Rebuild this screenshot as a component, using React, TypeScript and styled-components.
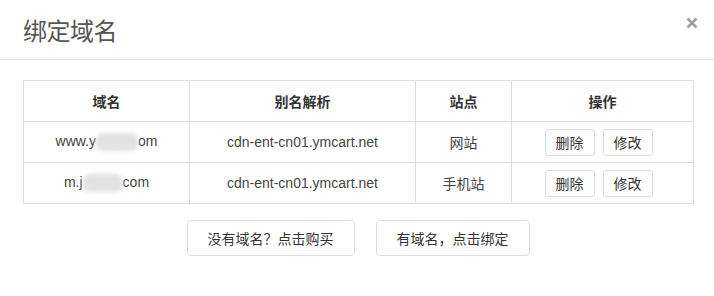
import React from "react";
import styled, { createGlobalStyle } from "styled-components";

const GlobalStyle = createGlobalStyle`
  html, body {
    margin: 0;
    padding: 0;
    background: #fff;
  }
  body {
    font-family: "Liberation Sans", "Noto Sans CJK SC", sans-serif;
    font-size: 14px;
    color: #333;
  }
`;

const Modal = styled.div`
  width: 714px;
  height: 296px;
  background: #fff;
  box-sizing: border-box;
`;

const Header = styled.div`
  position: relative;
  height: 60px;
  box-sizing: border-box;
  padding: 0 23px;
  display: flex;
  align-items: center;
  border-bottom: 1px solid #e5e5e5;
`;

const Title = styled.h4`
  margin: 0;
  font-size: 24px;
  font-weight: normal;
  color: #555;
  letter-spacing: -0.5px;
`;

const Close = styled.button`
  position: absolute;
  right: 14px;
  top: 15px;
  border: 0;
  background: none;
  padding: 0;
  width: 16px;
  height: 16px;
  cursor: pointer;
`;

const Body = styled.div`
  padding: 20px 21px 0 23px;
`;

const Table = styled.table`
  width: 670px;
  border-collapse: collapse;
  table-layout: fixed;
`;

const Th = styled.th<{ $w: number }>`
  width: ${(p) => p.$w}px;
  height: 41px;
  box-sizing: border-box;
  border: 1px solid #ddd;
  font-weight: bold;
  color: #333;
  text-align: center;
  padding: 0;
`;

const Td = styled.td<{ $shift?: number }>`
  height: 41px;
  box-sizing: border-box;
  border: 1px solid #ddd;
  text-align: center;
  color: #444;
  padding: 0 ${(p) => p.$shift ?? 0}px 0 0;
`;

const Masked = styled.span<{ $w: number }>`
  display: inline-block;
  width: ${(p) => p.$w}px;
  height: 18px;
  vertical-align: middle;
  background: #e2e2e2;
  filter: blur(2px);
  border-radius: 7px;
`;

const SmallButton = styled.button`
  font-family: inherit;
  font-size: 14px;
  color: #333;
  background: #fff;
  border: 1px solid #ddd;
  border-radius: 3px;
  height: 27px;
  padding: 0 10px;
  margin: 0 4px;
  cursor: pointer;
`;

const Footer = styled.div`
  display: flex;
  justify-content: center;
  gap: 21px;
  margin-top: 16px;
`;

const Button = styled.button`
  font-family: inherit;
  font-size: 14px;
  color: #333;
  background: #fff;
  border: 1px solid #ddd;
  border-radius: 4px;
  height: 36px;
  padding: 0 20px;
  cursor: pointer;
`;

interface Row {
  prefix: string;
  mask: number;
  suffix: string;
  alias: string;
  site: string;
}

const rows: Row[] = [
  { prefix: "www.y", mask: 42, suffix: "om", alias: "cdn-ent-cn01.ymcart.net", site: "网站" },
  { prefix: "m.j", mask: 40, suffix: "com", alias: "cdn-ent-cn01.ymcart.net", site: "手机站" },
];

const App: React.FC = () => {
  return (
    <>
      <GlobalStyle />
      <Modal>
        <Header>
          <Title>绑定域名</Title>
          <Close aria-label="关闭">
            <svg width="16" height="16" viewBox="0 0 16 16">
              <path d="M3.5 3.5 L12.5 12.5 M12.5 3.5 L3.5 12.5" stroke="#a0a0a0" strokeWidth="2.6" strokeLinecap="butt" />
            </svg>
          </Close>
        </Header>
        <Body>
          <Table>
            <thead>
              <tr>
                <Th $w={166}>域名</Th>
                <Th $w={226}>别名解析</Th>
                <Th $w={96}>站点</Th>
                <Th $w={182}>操作</Th>
              </tr>
            </thead>
            <tbody>
              {rows.map((row) => (
                <tr key={row.prefix}>
                  <Td>
                    {row.prefix}
                    <Masked $w={row.mask} />
                    {row.suffix}
                  </Td>
                  <Td>{row.alias}</Td>
                  <Td>{row.site}</Td>
                  <Td $shift={8}>
                    <SmallButton>删除</SmallButton>
                    <SmallButton>修改</SmallButton>
                  </Td>
                </tr>
              ))}
            </tbody>
          </Table>
          <Footer>
            <Button>没有域名？点击购买</Button>
            <Button>有域名，点击绑定</Button>
          </Footer>
        </Body>
      </Modal>
    </>
  );
};

export default App;
